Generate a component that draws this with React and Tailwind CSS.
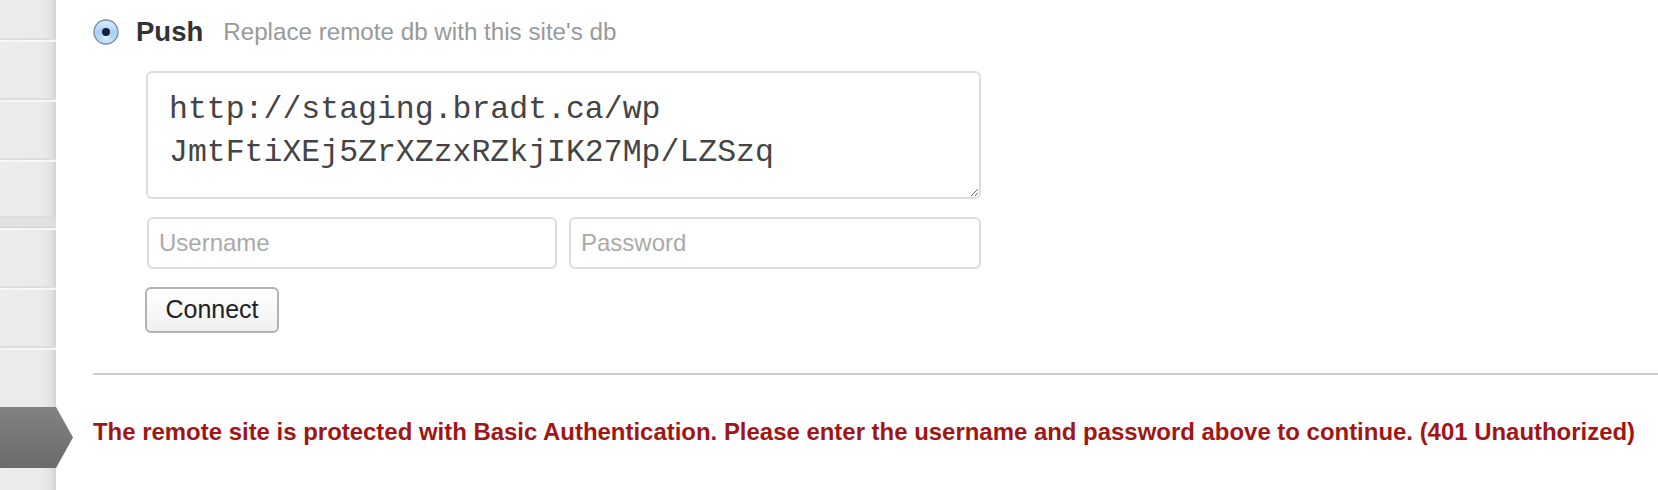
import React from "react";

function Radio() {
  return (
    <svg width="26" height="26" viewBox="0 0 26 26" className="shrink-0">
      <defs>
        <linearGradient id="rg" x1="0" y1="0" x2="0" y2="1">
          <stop offset="0" stopColor="#dcefff" />
          <stop offset="0.5" stopColor="#a9d2f7" />
          <stop offset="1" stopColor="#d6ecff" />
        </linearGradient>
        <radialGradient id="rg2" cx="0.5" cy="0.75" r="0.5">
          <stop offset="0" stopColor="#e8f6ff" stopOpacity="0.9" />
          <stop offset="1" stopColor="#7fb4ea" stopOpacity="0" />
        </radialGradient>
      </defs>
      <circle cx="13" cy="13" r="12" fill="url(#rg)" stroke="#7c8aa6" strokeWidth="1.3" />
      <circle cx="13" cy="13" r="11" fill="url(#rg2)" />
      <circle cx="13" cy="13" r="4" fill="#152338" />
    </svg>
  );
}

function SideItem({ first, h }) {
  return (
    <div
      className={
        "border-b-2 border-b-[#dcdcdc] " + (first ? "" : "border-t-2 border-t-[#f7f7f7] ")
      }
      style={{ height: h }}
    />
  );
}

export default function App() {
  return (
    <div
      className="flex w-full h-[490px] overflow-hidden bg-white"
      style={{ fontFamily: "'Liberation Sans', Arial, sans-serif" }}
    >
      {/* Sidebar */}
      <div className="w-[56px] shrink-0 flex flex-col bg-[linear-gradient(to_right,#ececec_0px,#eaeaea_43px,#e0e0e0_52px,#d2d2d2_56px)]">
        <SideItem first h={40} />
        <SideItem h={60} />
        <SideItem h={60} />
        <SideItem h={58} />
        <div className="h-[10px] bg-[#dedede]/80 border-b border-b-[#d2d2d2]" />
        <SideItem h={60} />
        <SideItem h={60} />
        <div className="h-[59px] border-t-2 border-t-[#f7f7f7]" />
        <div className="h-[61px] relative z-10">
          <div
            className="h-full w-[73px] bg-[linear-gradient(to_bottom,#828282,#6b6b6b)]"
            style={{ clipPath: "polygon(0 0, 56px 0, 73px 50%, 56px 100%, 0 100%)" }}
          />
        </div>
        <div className="flex-1" />
      </div>

      {/* Main */}
      <div className="flex-1 min-w-0 pl-[37px] flex flex-col">
        <div className="flex items-center h-[26px] mt-[19px]">
          <Radio />
          <span className="ml-[17px] text-[27.5px] font-bold text-[#333] leading-none">Push</span>
          <span className="ml-[20px] text-[24.2px] text-[#999] leading-none mt-[1px]">
            Replace remote db with this site's db
          </span>
        </div>

        <textarea
          className="mt-[26px] ml-[53px] w-[835px] h-[128px] shrink-0 border-2 border-[#dddddd] rounded-[6px] px-[21px] pt-[16px] text-[31.5px] leading-[42.5px] text-[#444] outline-none resize-y"
          style={{ fontFamily: "'Liberation Mono', 'Courier New', monospace" }}
          defaultValue={"http://staging.bradt.ca/wp\nJmtFtiXEj5ZrXZzxRZkjIK27Mp/LZSzq"}
        />

        <div className="flex gap-[12px] mt-[18px] ml-[54px]">
          <input
            placeholder="Username"
            className="w-[410px] h-[52px] border-2 border-[#dddddd] rounded-[6px] px-[10px] text-[24px] text-[#333] placeholder:text-[#aaaaaa] outline-none"
          />
          <input
            placeholder="Password"
            className="w-[412px] h-[52px] border-2 border-[#dddddd] rounded-[6px] px-[10px] text-[24px] text-[#333] placeholder:text-[#aaaaaa] outline-none"
          />
        </div>

        <div className="mt-[18px] ml-[52px]">
          <button className="w-[134px] h-[46px] border-2 border-[#b3b3b3] rounded-[6px] bg-[linear-gradient(to_bottom,#ffffff,#f0f0f0)] text-[25px] text-[#222]">
            Connect
          </button>
        </div>

        <div className="mt-[40px] h-[2px] bg-[#cdcdcd]" />

        <p className="mt-[45px] text-[23.95px] font-bold text-[#a11515] leading-none whitespace-nowrap">
          The remote site is protected with Basic Authentication. Please enter the username and password above to continue. (401 Unauthorized)
        </p>
      </div>
    </div>
  );
}
